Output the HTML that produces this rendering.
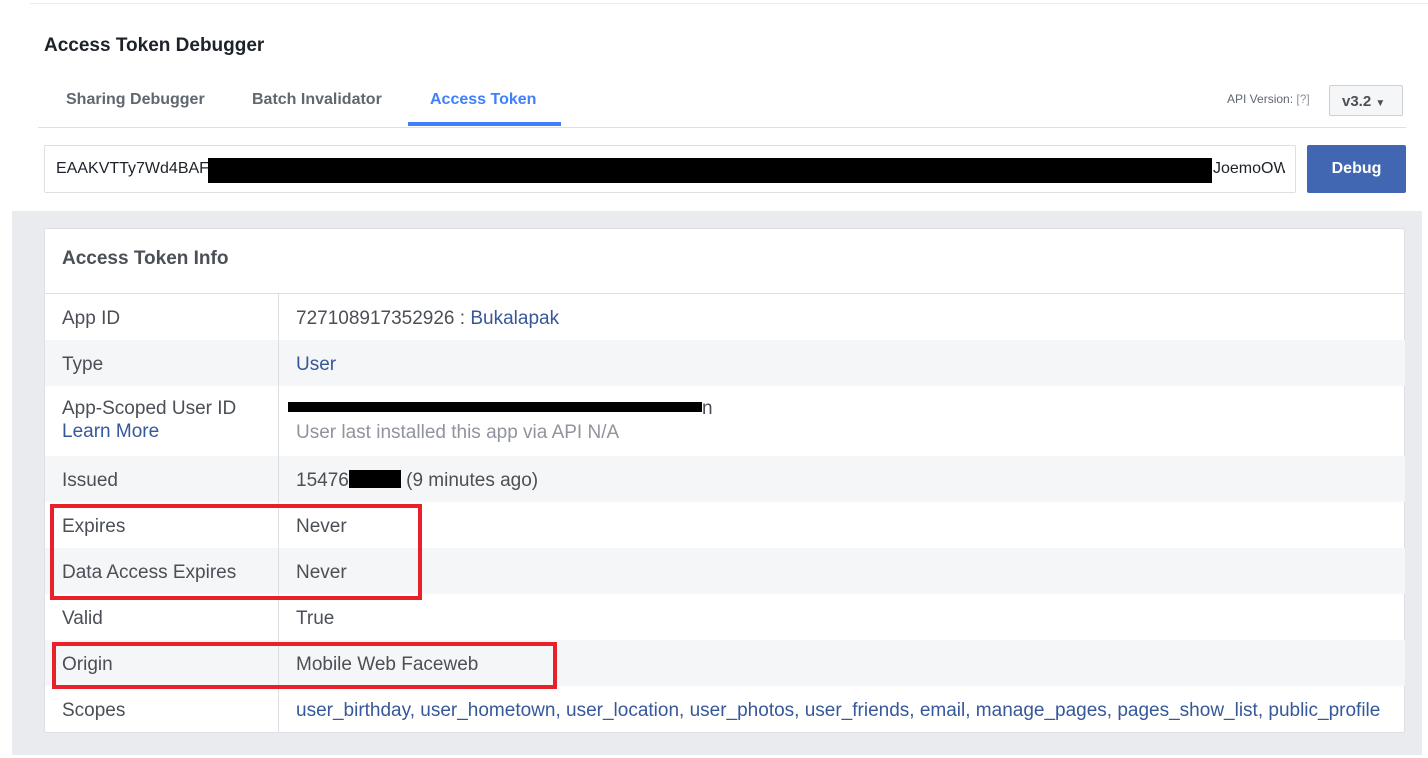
<!DOCTYPE html>
<html><head><style>
body{margin:0;width:1428px;height:758px;background:#fff;font-family:"Liberation Sans",Arial,sans-serif;position:relative;overflow:hidden}
.a{position:absolute}
.row{position:absolute;left:45px;width:1360px;height:46px;font-size:19px;color:#4b4f56}
.row .l{position:absolute;left:17px;top:14px}
.row .v{position:absolute;left:251px;top:14px;white-space:nowrap}
.g{background:#f5f6f7}
.lk{color:#365899}
.red{position:absolute;border:4px solid #e8202a}
</style></head><body>
<div class="a" style="left:30px;top:3px;width:1398px;height:1px;background:#e9ebee"></div>
<div class="a" style="left:44px;top:35px;font-size:19px;font-weight:bold;color:#1d2129">Access Token Debugger</div>
<div class="a" style="left:66px;top:91px;font-size:16px;font-weight:bold;color:#606770">Sharing Debugger</div>
<div class="a" style="left:252px;top:91px;font-size:16px;font-weight:bold;color:#606770">Batch Invalidator</div>
<div class="a" style="left:430px;top:91px;font-size:16px;font-weight:bold;color:#4080ff">Access Token</div>
<div class="a" style="left:408px;top:122px;width:153px;height:4px;background:#4080ff"></div>
<div class="a" style="left:38px;top:127px;width:1368px;height:1px;background:#dddfe2"></div>
<div class="a" style="left:1227px;top:92px;font-size:12px;color:#606770">API Version: <span style="color:#90949c">[?]</span></div>
<div class="a" style="left:1329px;top:85px;width:74px;height:31px;background:#f5f6f7;border:1px solid #ccd0d5;border-radius:2px;box-sizing:border-box;font-size:15px;font-weight:bold;color:#4b4f56;padding:7px 0 0 12px">v3.2 <span style="font-size:10px">&#9660;</span></div>
<div class="a" style="left:44px;top:145px;width:1252px;height:48px;border:1px solid #dddfe2;box-sizing:border-box;border-radius:2px"></div>
<div class="a" style="left:56px;top:160px;font-size:16px;color:#1d2129">EAAKVTTy7Wd4BAF</div>
<div class="a" style="left:208px;top:158px;width:1004px;height:25px;background:#000"></div>
<div class="a" style="left:1213px;top:160px;font-size:16px;color:#1d2129;width:72px;overflow:hidden;white-space:nowrap">JoemoOW</div>
<div class="a" style="left:1307px;top:145px;width:99px;height:48px;background:#4267b2;border-radius:2px;color:#fff;font-weight:bold;font-size:16px;text-align:center;line-height:48px">Debug</div>
<div class="a" style="left:12px;top:211px;width:1410px;height:544px;background:#e9ebee"></div>
<div class="a" style="left:44px;top:228px;width:1361px;height:505px;background:#fff;border:1px solid #dddfe2;box-sizing:border-box;border-radius:3px"></div>
<div class="a" style="left:62px;top:248px;font-size:19px;font-weight:bold;color:#4b4f56">Access Token Info</div>
<div class="a" style="left:45px;top:293px;width:1359px;height:1px;background:#dddfe2"></div>
<div class="row" style="top:294px"><span class="l">App ID</span><span class="v">727108917352926 : <span class="lk">Bukalapak</span></span></div>
<div class="row g" style="top:340px"><span class="l">Type</span><span class="v lk">User</span></div>
<div class="row" style="top:386px;height:70px"><span class="l" style="top:12px">App-Scoped User ID<br><span class="lk" style="line-height:24px">Learn More</span></span><span class="v" style="top:36px;color:#90949c">User last installed this app via API N/A</span></div>
<div class="a" style="left:288px;top:402px;width:414px;height:10px;background:#000"></div>
<div class="a" style="left:702px;top:398px;font-size:19px;color:#4b4f56">n</div>
<div class="row g" style="top:456px"><span class="l">Issued</span><span class="v">15476<span style="display:inline-block;width:52px;height:18px;background:#000;vertical-align:-2px"></span> (9 minutes ago)</span></div>
<div class="row" style="top:502px"><span class="l">Expires</span><span class="v">Never</span></div>
<div class="row g" style="top:548px"><span class="l">Data Access Expires</span><span class="v">Never</span></div>
<div class="row" style="top:594px"><span class="l">Valid</span><span class="v">True</span></div>
<div class="row g" style="top:640px"><span class="l">Origin</span><span class="v">Mobile Web Faceweb</span></div>
<div class="row" style="top:686px;height:46px"><span class="l">Scopes</span><span class="v lk">user_birthday, user_hometown, user_location, user_photos, user_friends, email, manage_pages, pages_show_list, public_profile</span></div>
<div class="a" style="left:278px;top:294px;width:1px;height:438px;background:#dddfe2"></div>
<div class="red" style="left:50px;top:504px;width:364px;height:88px"></div>
<div class="red" style="left:52px;top:642px;width:497px;height:39px"></div>
</body></html>
